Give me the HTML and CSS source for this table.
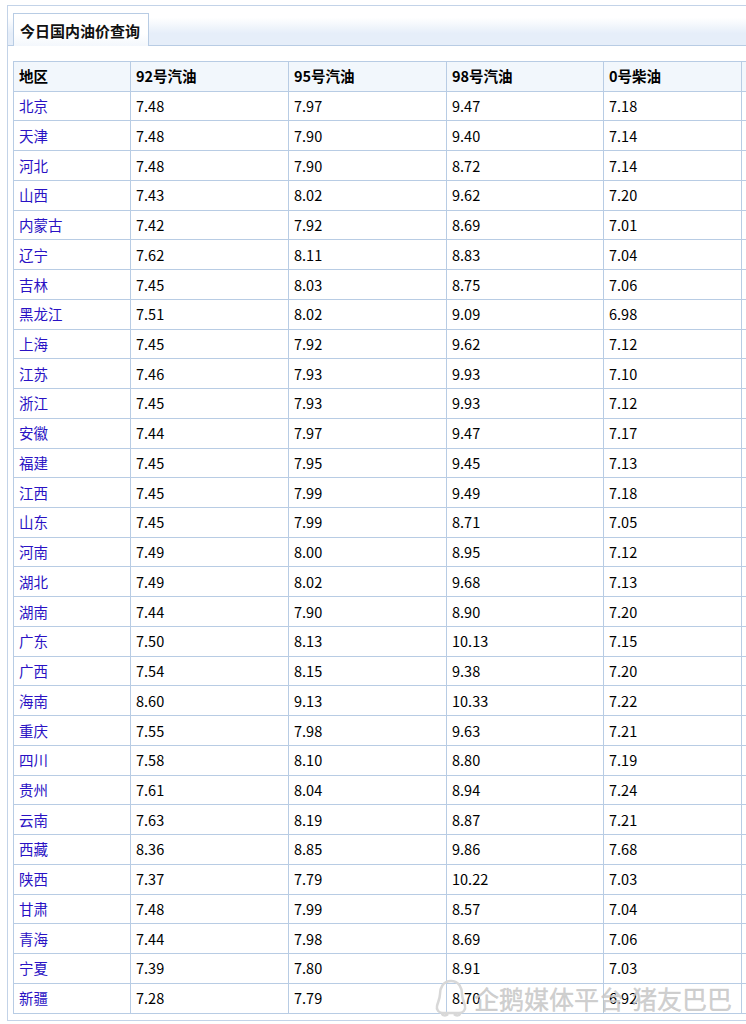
FILE: index.html
```html
<!DOCTYPE html>
<html lang="zh">
<head>
<meta charset="utf-8">
<title>今日国内油价查询</title>
<link rel="stylesheet" href="styles.css">
</head>
<body>
<div class="box">
  <div class="tabbar">
    <div class="tab">今日国内油价查询</div>
  </div>
  <div class="content">
    <table class="prices">
      <colgroup>
        <col class="c1"><col class="c2"><col class="c3"><col class="c4"><col class="c5"><col class="c6">
      </colgroup>
      <thead>
        <tr><th>地区</th><th>92号汽油</th><th>95号汽油</th><th>98号汽油</th><th>0号柴油</th><th></th></tr>
      </thead>
      <tbody>
        <tr><td><a href="#">北京</a></td><td>7.48</td><td>7.97</td><td>9.47</td><td>7.18</td><td></td></tr>
        <tr><td><a href="#">天津</a></td><td>7.48</td><td>7.90</td><td>9.40</td><td>7.14</td><td></td></tr>
        <tr><td><a href="#">河北</a></td><td>7.48</td><td>7.90</td><td>8.72</td><td>7.14</td><td></td></tr>
        <tr><td><a href="#">山西</a></td><td>7.43</td><td>8.02</td><td>9.62</td><td>7.20</td><td></td></tr>
        <tr><td><a href="#">内蒙古</a></td><td>7.42</td><td>7.92</td><td>8.69</td><td>7.01</td><td></td></tr>
        <tr><td><a href="#">辽宁</a></td><td>7.62</td><td>8.11</td><td>8.83</td><td>7.04</td><td></td></tr>
        <tr><td><a href="#">吉林</a></td><td>7.45</td><td>8.03</td><td>8.75</td><td>7.06</td><td></td></tr>
        <tr><td><a href="#">黑龙江</a></td><td>7.51</td><td>8.02</td><td>9.09</td><td>6.98</td><td></td></tr>
        <tr><td><a href="#">上海</a></td><td>7.45</td><td>7.92</td><td>9.62</td><td>7.12</td><td></td></tr>
        <tr><td><a href="#">江苏</a></td><td>7.46</td><td>7.93</td><td>9.93</td><td>7.10</td><td></td></tr>
        <tr><td><a href="#">浙江</a></td><td>7.45</td><td>7.93</td><td>9.93</td><td>7.12</td><td></td></tr>
        <tr><td><a href="#">安徽</a></td><td>7.44</td><td>7.97</td><td>9.47</td><td>7.17</td><td></td></tr>
        <tr><td><a href="#">福建</a></td><td>7.45</td><td>7.95</td><td>9.45</td><td>7.13</td><td></td></tr>
        <tr><td><a href="#">江西</a></td><td>7.45</td><td>7.99</td><td>9.49</td><td>7.18</td><td></td></tr>
        <tr><td><a href="#">山东</a></td><td>7.45</td><td>7.99</td><td>8.71</td><td>7.05</td><td></td></tr>
        <tr><td><a href="#">河南</a></td><td>7.49</td><td>8.00</td><td>8.95</td><td>7.12</td><td></td></tr>
        <tr><td><a href="#">湖北</a></td><td>7.49</td><td>8.02</td><td>9.68</td><td>7.13</td><td></td></tr>
        <tr><td><a href="#">湖南</a></td><td>7.44</td><td>7.90</td><td>8.90</td><td>7.20</td><td></td></tr>
        <tr><td><a href="#">广东</a></td><td>7.50</td><td>8.13</td><td>10.13</td><td>7.15</td><td></td></tr>
        <tr><td><a href="#">广西</a></td><td>7.54</td><td>8.15</td><td>9.38</td><td>7.20</td><td></td></tr>
        <tr><td><a href="#">海南</a></td><td>8.60</td><td>9.13</td><td>10.33</td><td>7.22</td><td></td></tr>
        <tr><td><a href="#">重庆</a></td><td>7.55</td><td>7.98</td><td>9.63</td><td>7.21</td><td></td></tr>
        <tr><td><a href="#">四川</a></td><td>7.58</td><td>8.10</td><td>8.80</td><td>7.19</td><td></td></tr>
        <tr><td><a href="#">贵州</a></td><td>7.61</td><td>8.04</td><td>8.94</td><td>7.24</td><td></td></tr>
        <tr><td><a href="#">云南</a></td><td>7.63</td><td>8.19</td><td>8.87</td><td>7.21</td><td></td></tr>
        <tr><td><a href="#">西藏</a></td><td>8.36</td><td>8.85</td><td>9.86</td><td>7.68</td><td></td></tr>
        <tr><td><a href="#">陕西</a></td><td>7.37</td><td>7.79</td><td>10.22</td><td>7.03</td><td></td></tr>
        <tr><td><a href="#">甘肃</a></td><td>7.48</td><td>7.99</td><td>8.57</td><td>7.04</td><td></td></tr>
        <tr><td><a href="#">青海</a></td><td>7.44</td><td>7.98</td><td>8.69</td><td>7.06</td><td></td></tr>
        <tr><td><a href="#">宁夏</a></td><td>7.39</td><td>7.80</td><td>8.91</td><td>7.03</td><td></td></tr>
        <tr><td><a href="#">新疆</a></td><td>7.28</td><td>7.79</td><td>8.70</td><td>6.92</td><td></td></tr>
      </tbody>
    </table>
  </div>
</div>
<div class="watermark">
  <svg class="wm-icon" width="34" height="40" viewBox="0 0 34 40">
    <path d="M17 3 C9 3 6 10 6 16 C6 20 4 24 3 28 C2 32 5 35 9 35 L25 35 C29 35 32 32 31 28 C30 24 28 20 28 16 C28 10 25 3 17 3 Z" fill="none" stroke="#d8d8d8" stroke-width="2.5"/>
    <path d="M8 35 C8 38 12 38 14 36 M26 35 C26 38 22 38 20 36" fill="none" stroke="#d8d8d8" stroke-width="2.5"/>
  </svg>
  <span class="wm-text">企鹅媒体平台</span><span class="wm-text wm-name">猪友巴巴</span>
</div>
</body>
</html>
```

FILE: styles.css
```css
html, body {
  margin: 0;
  padding: 0;
  overflow: hidden;
  background: #ffffff;
}

body {
  font-family: "Noto Sans CJK SC", "Microsoft YaHei", sans-serif;
  font-size: 14.5px;
  color: #000000;
  position: relative;
  width: 746px;
  height: 1024px;
}

.box {
  margin: 5px 0 0 7px;
  width: 820px;
  height: 1016px;
  border: 1px solid #c3d3e8;
  box-sizing: border-box;
  background: #ffffff;
}

.tabbar {
  height: 39px;
  border-bottom: 1px solid #b8cce4;
  background: linear-gradient(to bottom, #ffffff 0%, #ffffff 30%, #e6eef9 70%, #e6eef9 100%);
  display: flex;
  align-items: flex-end;
  padding-left: 5px;
}

.tab {
  height: 33px;
  margin-bottom: -1px;
  padding: 0 6px;
  border: 1px solid #b8cce4;
  border-bottom: none;
  background: linear-gradient(to bottom, #ffffff 0%, #ffffff 60%, #f3f7fc 100%);
  font-weight: bold;
  font-size: 15px;
  line-height: 33px;
  color: #111111;
  box-sizing: border-box;
  width: 136px;
  white-space: nowrap;
}

.content {
  padding: 15px 0 0 5px;
}

.prices {
  border-collapse: collapse;
  table-layout: fixed;
  width: 860px;
}

.prices th,
.prices td {
  border: 1px solid #b8cce4;
  padding: 0 0 0 5px;
  height: 29.74px;
  box-sizing: border-box;
  text-align: left;
  vertical-align: middle;
  white-space: nowrap;
  line-height: 20px;
}

.prices th {
  background: #f2f7fc;
  font-weight: bold;
  color: #000000;
}

.prices .c1 { width: 117px; }
.prices .c2 { width: 158px; }
.prices .c3 { width: 158px; }
.prices .c4 { width: 157px; }
.prices .c5 { width: 138px; }
.prices .c6 { width: 132px; }

.prices a {
  color: #2a12c4;
  text-decoration: none;
}

.watermark {
  position: absolute;
  left: 434px;
  top: 978px;
  display: flex;
  align-items: center;
  gap: 6px;
  pointer-events: none;
}

.wm-icon {
  flex: none;
}

.wm-text {
  font-family: "Noto Sans CJK SC", sans-serif;
  font-size: 25px;
  line-height: 40px;
  color: rgba(200, 200, 200, 0.85);
  -webkit-text-stroke: 0.5px rgba(190, 190, 190, 0.6);
}

.wm-name {
  margin-left: 2px;
}
```
